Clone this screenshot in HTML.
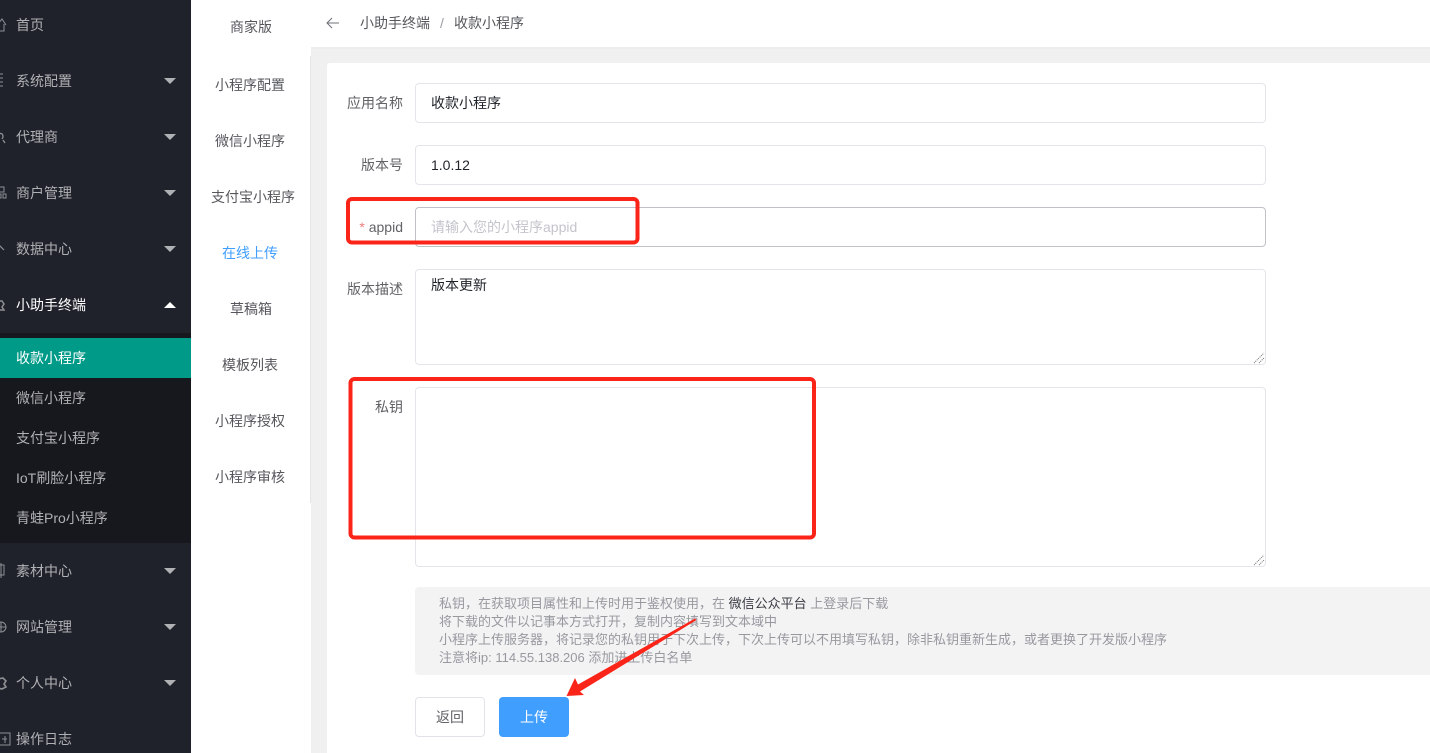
<!DOCTYPE html>
<html lang="zh-CN">
<head>
<meta charset="utf-8">
<title>收款小程序</title>
<style>
html,body{margin:0;padding:0;width:1430px;height:753px;overflow:hidden;background:#fff}
body{position:relative;font-family:"Liberation Sans","Noto Sans CJK SC",sans-serif;font-size:14px;color:#555}
.a{position:absolute;white-space:nowrap}
.side{position:absolute;left:0;top:0;width:191px;height:753px;background:#1f222b}
.sub{position:absolute;left:0;top:333px;width:191px;height:210px;background:#17181d}
.act{position:absolute;left:0;top:338px;width:191px;height:40px;background:#009a88}
.m{position:absolute;left:16px;height:20px;line-height:20px;color:#b0b1b4;white-space:nowrap}
.m.w{color:#fff}
.tri{position:absolute;left:164px;width:0;height:0;border-left:6px solid transparent;border-right:6px solid transparent;border-top:6px solid #b0b1b4}
.tri.up{border-top:0;border-bottom:6px solid #fff}
.n{position:absolute;left:191px;width:120px;text-align:center;height:20px;line-height:20px;color:#55575c;white-space:nowrap}
.lab{position:absolute;right:1027px;height:20px;line-height:20px;color:#606266;white-space:nowrap}
.box{position:absolute;left:415px;width:851px;box-sizing:border-box;border:1px solid #e4e5ea;border-radius:4px;background:#fff}
.v{position:absolute;left:431px;height:20px;line-height:20px;color:#1f2329;white-space:nowrap}
.hint{position:absolute;left:415px;top:587px;width:1015px;height:88px;background:#f3f3f4;border-radius:4px 0 0 4px}
.h{position:absolute;left:439px;height:18px;line-height:18px;font-size:13px;color:#97999f;white-space:nowrap}
</style>
</head>
<body>
<div class="a" style="left:311px;top:47px;width:1119px;height:706px;background:#f0f0f1"></div>
<div class="a" style="left:311px;top:47px;width:1119px;height:2px;background:#ededee"></div>
<div class="a" style="left:327px;top:63px;width:1103px;height:690px;background:#fff;border-radius:3px 0 0 0"></div>
<div class="a" style="left:191px;top:0;width:120px;height:753px;background:#fff"></div>
<div class="a" style="left:310px;top:56px;width:1px;height:447px;background:#e6e6e8"></div>

<div class="side"></div>
<div class="sub"></div>
<div class="act"></div>

<svg class="a" style="left:0;top:0" width="16" height="753" viewBox="0 0 16 753" fill="none" stroke="#8f9094" stroke-width="1">
<path d="M-3 25L2 19L6 25M-1 24V31H4V24"/>
<path d="M-2 74H3M-2 78H3M-2 82H3M-2 86H3"/>
<path d="M-2 136C0 132 3 133 3 137L2 139M-1 140L-2 143M3 140L5 143" stroke-width="1.3"/>
<path d="M-2 187H4V192H-2ZM-2 194H1V198H-2ZM3 194H6V198H3Z"/>
<path d="M-3 249L0 246L4 250" stroke-width="1.2"/>
<path d="M-2 301H2L4 304L2 307L4 310H-2Z" stroke-width="1.5"/>
<path d="M-2 565H4V575H-2ZM1 563V578"/>
<circle cx="1" cy="627" r="5"/><path d="M-4 627H6M1 622V632"/>
<path d="M-2 679L3 678L6 681L4 684L6 687L2 689L-2 688" stroke-width="1.6"/>
<path d="M-2 733H10V745H-2ZM2 739H7M5 736V743"/>
</svg>

<div class="m" style="top:15px">首页</div>
<div class="m" style="top:71px">系统配置</div><div class="tri" style="top:78px"></div>
<div class="m" style="top:127px">代理商</div><div class="tri" style="top:134px"></div>
<div class="m" style="top:183px">商户管理</div><div class="tri" style="top:190px"></div>
<div class="m" style="top:239px">数据中心</div><div class="tri" style="top:246px"></div>
<div class="m w" style="top:295px">小助手终端</div><div class="tri up" style="top:302px"></div>
<div class="m w" style="top:348px">收款小程序</div>
<div class="m" style="top:388px">微信小程序</div>
<div class="m" style="top:428px">支付宝小程序</div>
<div class="m" style="top:468px">IoT刷脸小程序</div>
<div class="m" style="top:508px">青蛙Pro小程序</div>
<div class="m" style="top:561px">素材中心</div><div class="tri" style="top:568px"></div>
<div class="m" style="top:617px">网站管理</div><div class="tri" style="top:624px"></div>
<div class="m" style="top:673px">个人中心</div><div class="tri" style="top:680px"></div>
<div class="m" style="top:729px">操作日志</div>

<div class="n" style="top:17px">商家版</div>
<div class="n" style="top:75px;left:190px">小程序配置</div>
<div class="n" style="top:131px;left:190px">微信小程序</div>
<div class="n" style="top:187px;left:193px">支付宝小程序</div>
<div class="n" style="top:243px;left:190px;color:#409eff">在线上传</div>
<div class="n" style="top:299px">草稿箱</div>
<div class="n" style="top:355px;left:190px">模板列表</div>
<div class="n" style="top:411px;left:190px">小程序授权</div>
<div class="n" style="top:467px;left:190px">小程序审核</div>

<svg class="a" style="left:326px;top:16px" width="14" height="14" viewBox="0 0 14 14" fill="none" stroke="#6d7078" stroke-width="1"><path d="M13 7H1M6 2L1 7L6 12"/></svg>
<div class="a" style="left:360px;top:13px;height:20px;line-height:20px;color:#55575c">小助手终端</div>
<div class="a" style="left:440px;top:13px;height:20px;line-height:20px;color:#9a9ca3">/</div>
<div class="a" style="left:454px;top:13px;height:20px;line-height:20px;color:#55575c">收款小程序</div>

<div class="lab" style="top:93px">应用名称</div>
<div class="box" style="top:83px;height:40px"></div>
<div class="v" style="top:93px">收款小程序</div>

<div class="lab" style="top:155px">版本号</div>
<div class="box" style="top:145px;height:40px"></div>
<div class="v" style="top:155px">1.0.12</div>

<div class="lab" style="top:217px"><span style="color:#ed7a7a">* </span>appid</div>
<div class="box" style="top:207px;height:40px;border-color:#bfc0c8"></div>
<div class="v" style="top:217px;color:#c3c5cc">请输入您的小程序appid</div>

<div class="lab" style="top:279px">版本描述</div>
<div class="box" style="top:269px;height:96px"></div>
<div class="v" style="top:275px">版本更新</div>

<div class="lab" style="top:397px">私钥</div>
<div class="box" style="top:387px;height:180px"></div>

<svg class="a" style="left:1250px;top:350px" width="16" height="218" viewBox="0 0 16 218" fill="none" stroke="#6e6e6e" stroke-width="1" stroke-dasharray="1 1">
<path d="M4 13L14 3M9 13L14 8"/>
<path d="M4 215L14 205M9 215L14 210"/>
</svg>

<div class="hint"></div>
<div class="h" style="top:595px">私钥，在获取项目属性和上传时用于鉴权使用，在 <span style="color:#3a3d44">微信公众平台</span> 上登录后下载</div>
<div class="h" style="top:613px">将下载的文件以记事本方式打开，复制内容填写到文本域中</div>
<div class="h" style="top:631px">小程序上传服务器，将记录您的私钥用于下次上传，下次上传可以不用填写私钥，除非私钥重新生成，或者更换了开发版小程序</div>
<div class="h" style="top:649px">注意将ip: 114.55.138.206 添加进上传白名单</div>

<div class="a" style="left:415px;top:697px;width:70px;height:40px;box-sizing:border-box;border:1px solid #e2e3e9;border-radius:4px;background:#fff;text-align:center;line-height:38px;color:#606266">返回</div>
<div class="a" style="left:499px;top:697px;width:70px;height:40px;border-radius:4px;background:#409eff;text-align:center;line-height:40px;color:#fff">上传</div>

<svg class="a" style="left:0;top:0;pointer-events:none" width="1430" height="753" viewBox="0 0 1430 753" fill="none">
<rect x="348" y="199" width="289.500" height="43.500" rx="4" stroke="#fb2418" stroke-width="4"/>
<rect x="350.500" y="379" width="463.500" height="158.500" rx="4" stroke="#fb2418" stroke-width="4"/>
<path d="M695 618.500L696.500 620L580 691.500L584 695L566.500 696L575 678L578 684.500Z" fill="#fb2418"/>
</svg>
</body>
</html>
